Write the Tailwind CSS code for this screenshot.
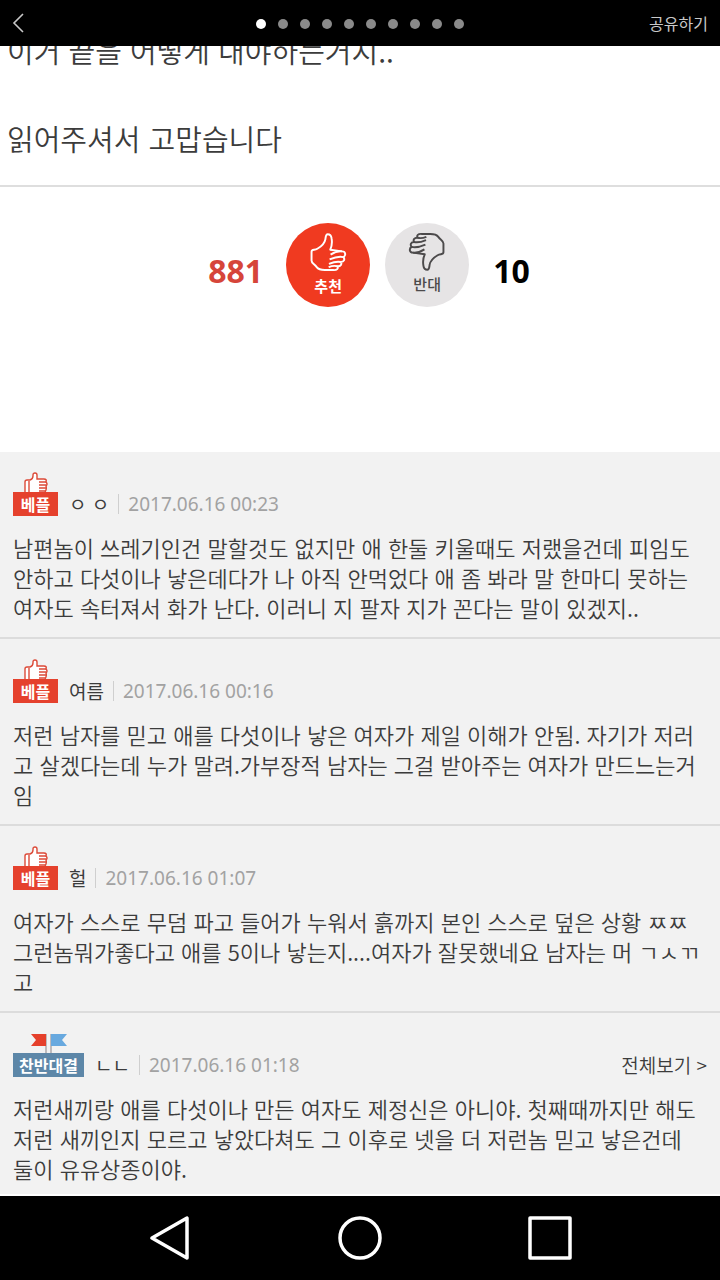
<!DOCTYPE html>
<html lang="ko">
  <head>
    <meta charset="UTF-8" />
    <meta name="viewport" content="width=device-width, initial-scale=1.0" />
    <title>베플</title>
    <script src="https://cdn.jsdelivr.net/npm/@tailwindcss/browser@4"></script>
  </head>
  <body class="min-h-screen flex flex-col bg-white text-[#3c3c3c] font-['Noto_Sans_CJK_KR',sans-serif]">
    <svg class="hidden">
      <symbol id="thumb" viewBox="325 64 120 124">
        <path
          d="M384 71C378 71 378 78 377 86C375 98 364 109 352 116C343 121 334 117 334 125V152C334 162 343 163 350 173C357 183 368 182 378 182H401C413 183 418 177 414 170C424 171 429 164 425 157C435 157 438 149 433 142C441 137 440 124 429 124L392 119C397 108 398 94 396 83C395 75 390 71 384 71Z"
        />
        <path d="M429 124C415 122 404 127 393 134M433 142C417 138 404 143 390 149M425 157C413 154 402 157 388 163M414 170C405 168 397 169 387 173" />
      </symbol>
      <symbol id="best" viewBox="0 0 24 20">
        <path d="M1 20V10Q1 8 3 8H6Q9 7 9 4V3Q9 1 11 1Q13 1 13 3V7H20Q23 7 22 10Q24 12 22 14Q23 17 21 20" fill="#fff" />
        <path d="M5 9V20M15 10H22M15 13H22M15 16H22M15 19H21" />
      </symbol>
    </svg>

    <header class="h-[46px] bg-black px-3 grid grid-cols-3 items-center text-[#c8c8c8]">
      <button aria-label="뒤로" class="justify-self-start">
        <svg class="w-3 h-5" viewBox="0 0 12 20" fill="none" stroke="currentColor" stroke-width="1.6">
          <path d="M11 1L2 10L11 19" />
        </svg>
      </button>
      <div class="flex justify-center gap-3 pt-[2px]">
        <span class="size-[10px] shrink-0 rounded-full bg-white"></span>
        <span class="size-[10px] shrink-0 rounded-full bg-[#8a8a8a]"></span>
        <span class="size-[10px] shrink-0 rounded-full bg-[#8a8a8a]"></span>
        <span class="size-[10px] shrink-0 rounded-full bg-[#8a8a8a]"></span>
        <span class="size-[10px] shrink-0 rounded-full bg-[#8a8a8a]"></span>
        <span class="size-[10px] shrink-0 rounded-full bg-[#8a8a8a]"></span>
        <span class="size-[10px] shrink-0 rounded-full bg-[#8a8a8a]"></span>
        <span class="size-[10px] shrink-0 rounded-full bg-[#8a8a8a]"></span>
        <span class="size-[10px] shrink-0 rounded-full bg-[#8a8a8a]"></span>
        <span class="size-[10px] shrink-0 rounded-full bg-[#8a8a8a]"></span>
      </div>
      <button class="justify-self-end text-[16px] leading-6">공유하기</button>
    </header>

    <main class="grow">
      <article class="overflow-hidden border-b-2 border-[#dedede] px-[7px] pb-[25px]">
        <div class="-mt-[18px] text-[29px] leading-[44px] font-[350]">
          <p>이거 끝을 어떻게 내야하는거지..</p>
          <br />
          <p>읽어주셔서 고맙습니다</p>
        </div>
      </article>

      <section class="flex justify-center items-center pl-[18px] pt-9 pb-[145px] text-[32px] leading-8 font-bold">
        <span class="pt-3 mr-[23px] text-[#d6453a] font-['Noto_Sans',sans-serif]">881</span>
        <button class="size-[84px] rounded-full bg-[#f03a20] text-white flex flex-col items-center pt-[9px]">
          <svg class="size-10" fill="none" stroke="currentColor" stroke-width="6" stroke-linejoin="round"><use href="#thumb" /></svg>
          <span class="mt-1 text-[15px] leading-5">추천</span>
        </button>
        <button class="ml-[15px] size-[84px] rounded-full bg-[#e6e4e5] text-[#4c4a4b] flex flex-col items-center pt-[9px]">
          <svg class="size-10 rotate-180" fill="none" stroke="currentColor" stroke-width="6" stroke-linejoin="round"><use href="#thumb" /></svg>
          <span class="mt-[2px] text-[15px] leading-5 font-medium">반대</span>
        </button>
        <span class="pt-3 ml-6 text-black font-['Noto_Sans',sans-serif]">10</span>
      </section>

      <section class="bg-[#f2f2f2]">
        <div class="border-b-2 border-[#dcdcdc] px-[13px] pt-5 pb-[15px]">
          <div class="flex items-end text-[19px] leading-6">
            <div class="w-[45px] flex flex-col items-center">
              <svg class="w-6 h-5" fill="none" stroke="#dc4a38" stroke-width="1.4"><use href="#best" /></svg>
              <span class="w-full bg-[#e5412d] text-center text-white text-[16px] font-bold">베플</span>
            </div>
            <span class="ml-[11px]">ㅇ ㅇ</span>
            <span class="mx-[9px] mb-[2px] h-5 w-px bg-[#cfcfcf]"></span>
            <time class="text-[#a2a2a2] font-['Noto_Sans',sans-serif]">2017.06.16 00:23</time>
          </div>
          <p class="mt-4 text-[22px] leading-[30px] font-[350]">
            남편놈이 쓰레기인건 말할것도 없지만 애 한둘 키울때도 저랬을건데 피임도<br />
            안하고 다섯이나 낳은데다가 나 아직 안먹었다 애 좀 봐라 말 한마디 못하는<br />
            여자도 속터져서 화가 난다. 이러니 지 팔자 지가 꼰다는 말이 있겠지..
          </p>
        </div>

        <div class="border-b-2 border-[#dcdcdc] px-[13px] pt-5 pb-[15px]">
          <div class="flex items-end text-[19px] leading-6">
            <div class="w-[45px] flex flex-col items-center">
              <svg class="w-6 h-5" fill="none" stroke="#dc4a38" stroke-width="1.4"><use href="#best" /></svg>
              <span class="w-full bg-[#e5412d] text-center text-white text-[16px] font-bold">베플</span>
            </div>
            <span class="ml-[11px]">여름</span>
            <span class="mx-[9px] mb-[2px] h-5 w-px bg-[#cfcfcf]"></span>
            <time class="text-[#a2a2a2] font-['Noto_Sans',sans-serif]">2017.06.16 00:16</time>
          </div>
          <p class="mt-4 text-[22px] leading-[30px] font-[350]">
            저런 남자를 믿고 애를 다섯이나 낳은 여자가 제일 이해가 안됨. 자기가 저러<br />
            고 살겠다는데 누가 말려.가부장적 남자는 그걸 받아주는 여자가 만드느는거<br />
            임
          </p>
        </div>

        <div class="border-b-2 border-[#dcdcdc] px-[13px] pt-5 pb-[15px]">
          <div class="flex items-end text-[19px] leading-6">
            <div class="w-[45px] flex flex-col items-center">
              <svg class="w-6 h-5" fill="none" stroke="#dc4a38" stroke-width="1.4"><use href="#best" /></svg>
              <span class="w-full bg-[#e5412d] text-center text-white text-[16px] font-bold">베플</span>
            </div>
            <span class="ml-[11px]">헐</span>
            <span class="mx-[9px] mb-[2px] h-5 w-px bg-[#cfcfcf]"></span>
            <time class="text-[#a2a2a2] font-['Noto_Sans',sans-serif]">2017.06.16 01:07</time>
          </div>
          <p class="mt-4 text-[22px] leading-[30px] font-[350]">
            여자가 스스로 무덤 파고 들어가 누워서 흙까지 본인 스스로 덮은 상황 ㅉㅉ<br />
            그런놈뭐가좋다고 애를 5이나 낳는지....여자가 잘못했네요 남자는 머 ㄱㅅㄲ<br />
            고
          </p>
        </div>

        <div class="px-[13px] pt-5 pb-[11px]">
          <div class="flex items-end text-[19px] leading-6">
            <div class="w-[71px] flex flex-col items-center">
              <svg class="w-9 h-5" viewBox="0 0 36 20">
                <path d="M15 1V20M20 1V20" stroke="#a9a4a6" stroke-width="1.4" />
                <path d="M0 1H15V13H0L5 7Z" fill="#e5402b" />
                <path d="M20 1H36L31 7L36 13H20Z" fill="#68a9df" />
              </svg>
              <span class="w-full bg-[#5d87a8] text-center text-white text-[16px] font-bold">찬반대결</span>
            </div>
            <span class="ml-[11px]">ㄴㄴ</span>
            <span class="mx-[9px] mb-[2px] h-5 w-px bg-[#cfcfcf]"></span>
            <time class="text-[#a2a2a2] font-['Noto_Sans',sans-serif]">2017.06.16 01:18</time>
            <a href="#" class="ml-auto font-[350]">전체보기 &gt;</a>
          </div>
          <p class="mt-4 text-[22px] leading-[30px] font-[350]">
            저런새끼랑 애를 다섯이나 만든 여자도 제정신은 아니야. 첫째때까지만 해도<br />
            저런 새끼인지 모르고 낳았다쳐도 그 이후로 넷을 더 저런놈 믿고 낳은건데<br />
            둘이 유유상종이야.
          </p>
        </div>
      </section>
    </main>

    <nav class="h-[84px] bg-black px-[75px] grid grid-cols-3 place-items-center text-white">
      <button aria-label="이전">
        <svg class="size-11" viewBox="0 0 44 44" fill="none" stroke="currentColor" stroke-width="3.5" stroke-linejoin="round">
          <path d="M39 2V42L4 22Z" />
        </svg>
      </button>
      <button aria-label="홈">
        <svg class="size-11" viewBox="0 0 44 44" fill="none" stroke="currentColor" stroke-width="3.5">
          <circle cx="22" cy="22" r="20" />
        </svg>
      </button>
      <button aria-label="최근 앱">
        <svg class="size-11" viewBox="0 0 44 44" fill="none" stroke="currentColor" stroke-width="3.5" stroke-linejoin="round">
          <path d="M2 2H42V42H2Z" />
        </svg>
      </button>
    </nav>
  </body>
</html>
